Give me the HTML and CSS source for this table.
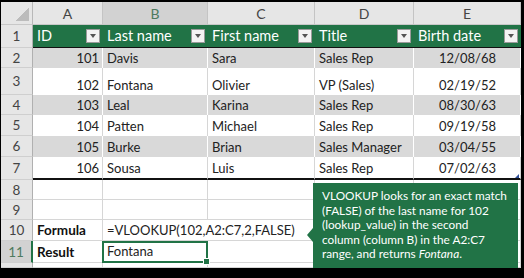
FILE: index.html
```html
<!DOCTYPE html>
<html lang="en">
<head>
    <meta charset="UTF-8">
    <title>VLOOKUP example</title>
    <link rel="stylesheet" href="styles.css">
</head>
<body>
    <div class="frame">
        <div class="sheet">
            <!-- column headers -->
            <div class="corner"></div>
            <div class="colhead">A</div>
            <div class="colhead active">B</div>
            <div class="colhead">C</div>
            <div class="colhead">D</div>
            <div class="colhead">E</div>

            <!-- row 1: table header -->
            <div class="rowhead">1</div>
            <div class="th">ID<span class="filter"></span></div>
            <div class="th">Last name<span class="filter"></span></div>
            <div class="th">First name<span class="filter"></span></div>
            <div class="th">Title<span class="filter"></span></div>
            <div class="th">Birth date<span class="filter"></span></div>

            <div class="rowhead">2</div>
            <div class="td band num">101</div>
            <div class="td band">Davis</div>
            <div class="td band">Sara</div>
            <div class="td band">Sales Rep</div>
            <div class="td band date">12/08/68</div>

            <div class="rowhead">3</div>
            <div class="td num">102</div>
            <div class="td">Fontana</div>
            <div class="td">Olivier</div>
            <div class="td">VP (Sales)</div>
            <div class="td date">02/19/52</div>

            <div class="rowhead">4</div>
            <div class="td band num">103</div>
            <div class="td band">Leal</div>
            <div class="td band">Karina</div>
            <div class="td band">Sales Rep</div>
            <div class="td band date">08/30/63</div>

            <div class="rowhead">5</div>
            <div class="td num">104</div>
            <div class="td">Patten</div>
            <div class="td">Michael</div>
            <div class="td">Sales Rep</div>
            <div class="td date">09/19/58</div>

            <div class="rowhead">6</div>
            <div class="td band num">105</div>
            <div class="td band">Burke</div>
            <div class="td band">Brian</div>
            <div class="td band">Sales Manager</div>
            <div class="td band date">03/04/55</div>

            <div class="rowhead">7</div>
            <div class="td last num">106</div>
            <div class="td last">Sousa</div>
            <div class="td last">Luis</div>
            <div class="td last">Sales Rep</div>
            <div class="td last date resize">07/02/63</div>

            <div class="rowhead">8</div>
            <div class="cell"></div><div class="cell"></div><div class="cell"></div><div class="cell"></div><div class="cell"></div>

            <div class="rowhead">9</div>
            <div class="cell"></div><div class="cell"></div><div class="cell"></div><div class="cell"></div><div class="cell"></div>

            <div class="rowhead">10</div>
            <div class="cell label">Formula</div>
            <div class="cell span2">=VLOOKUP(102,A2:C7,2,FALSE)</div>
            <div class="cell"></div><div class="cell"></div>

            <div class="rowhead active">11</div>
            <div class="cell label">Result</div>
            <div class="cell selected">Fontana</div>
            <div class="cell"></div><div class="cell"></div><div class="cell"></div>

            <div class="rowhead"></div>
            <div class="cell"></div><div class="cell"></div><div class="cell"></div><div class="cell"></div><div class="cell"></div>
        </div>

        <div class="callout">
            VLOOKUP looks for an exact match<br>
            (FALSE) of the last name for 102<br>
            (lookup_value) in the second<br>
            column (column B) in the A2:C7<br>
            range, and returns <em>Fontana</em>.
        </div>
    </div>
</body>
</html>
```

FILE: styles.css
```css
/* page frame */
body {
    margin: 0;
    background: #000;
    font-family: Lato, 'Open Sans', sans-serif;
}

.frame {
    position: relative;
    width: 524px;
    height: 278px;
    box-sizing: border-box;
    padding: 2px 3px 10px 1px;
    background: #000;
}

/* grid of cells */
.sheet {
    display: grid;
    grid-template-columns: 32px 70px 105px 107px 99px 107px;
    grid-template-rows: 23px 23px 20px 27px 20px 21px 21px 23px 20px 20px 21px 22px 5px;
    height: 266px;
    overflow: hidden;
    background: #fff;
    font-size: 13px;
    color: #222;
}

.sheet > div {
    box-sizing: border-box;
    white-space: nowrap;
}

.corner {
    background: linear-gradient(to bottom right, transparent 50%, #bcbcbc 50%) no-repeat right 3px bottom 3px / 14px 14px, #e6e6e6;
    border-right: 1px solid #b8b8b8;
    border-bottom: 1px solid #c8c8c8;
}

.colhead {
    display: flex;
    justify-content: center;
    align-items: center;
    background: #e6e6e6;
    color: #444;
    font-size: 14px;
    border-right: 1px solid #c4c4c4;
    border-bottom: 1px solid #c8c8c8;
}

.colhead.active {
    background: #d2d2d2;
    color: #4d7a5e;
}

.rowhead {
    display: flex;
    justify-content: center;
    align-items: center;
    background: #e6e6e6;
    color: #444;
    font-size: 13.5px;
    border-right: 1px solid #b0b0b0;
    border-bottom: 1px solid #cfcfcf;
}

.rowhead.active {
    background: #d2d2d2;
    color: #4d7a5e;
    border-right: 2px solid #217346;
}

/* table header row */
.th {
    display: flex;
    justify-content: space-between;
    align-items: center;
    padding: 0 3px 1px 4px;
    background: #217346;
    color: #fff;
    font-size: 14.5px;
    border-bottom: 1px solid #111;
}

.filter {
    display: flex;
    justify-content: center;
    align-items: center;
    width: 14px;
    height: 14px;
    box-sizing: border-box;
    background: #f3f3f3;
    border: 1px solid #9a9a9a;
}

.filter::before {
    content: '';
    border-top: 4px solid #555;
    border-left: 3.5px solid transparent;
    border-right: 3.5px solid transparent;
    margin-top: 1px;
}

/* table body */
.td {
    display: flex;
    align-items: flex-end;
    padding: 0 3px 1px 4px;
    line-height: 18px;
    border-right: 1px solid #d6d6d6;
}

.td.band {
    background: #d9d9d9;
    border-right-color: #fff;
}

.td.num {
    justify-content: flex-end;
}

.td.date {
    justify-content: center;
}

.td.last {
    border-bottom: 2px solid #111;
}

.td.resize {
    position: relative;
}

.td.resize::after {
    content: '';
    position: absolute;
    right: 1px;
    bottom: 0;
    border-bottom: 4px solid #2f4f9a;
    border-left: 4px solid transparent;
}

/* plain cells */
.cell {
    display: flex;
    align-items: flex-end;
    padding: 0 3px 1px 4px;
    line-height: 18px;
    border-right: 1px solid #d6d6d6;
    border-bottom: 1px solid #d6d6d6;
}

.cell.label {
    font-size: 13.5px;
    font-weight: 700;
    color: #111;
}

.cell.span2 {
    grid-column: span 2;
}

.cell.selected {
    position: relative;
    border: 2px solid #217346;
    margin-left: -1px;
    padding-left: 3px;
}

.cell.selected::after {
    content: '';
    position: absolute;
    right: -4px;
    bottom: -4px;
    width: 5px;
    height: 5px;
    background: #217346;
    border: 1px solid #fff;
}

/* note box */
.callout {
    position: absolute;
    left: 313px;
    top: 183px;
    width: 205px;
    height: 85px;
    box-sizing: border-box;
    padding: 6px 0 0 9px;
    background: #217346;
    color: #fff;
    font-size: 11.8px;
    line-height: 14.5px;
    white-space: nowrap;
}

.callout::before {
    content: '';
    position: absolute;
    left: -6px;
    top: 45px;
    border-right: 6px solid #217346;
    border-top: 7px solid transparent;
    border-bottom: 7px solid transparent;
}
```
